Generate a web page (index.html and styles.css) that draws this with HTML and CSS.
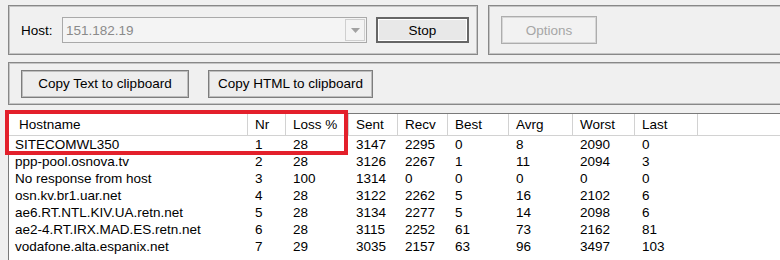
FILE: index.html
```html
<!DOCTYPE html>
<html lang="en">

<head>
    <meta charset="UTF-8">
    <title>Trace results</title>
    <link rel="stylesheet" href="styles.css">
</head>

<body>
    <div class="window">
        <div class="top-row">
            <div class="group host-group">
                <span class="host-label">Host:</span>
                <div class="combo">
                    <span class="combo-text">151.182.19</span>
                    <span class="combo-arrow">
                        <svg width="9" height="5" viewBox="0 0 9 5"><path d="M0 0h9L4.5 5z" fill="#a2a2a2"/></svg>
                    </span>
                </div>
                <button class="btn btn-default">Stop</button>
            </div>
            <div class="group options-group">
                <button class="btn btn-options" disabled>Options</button>
            </div>
        </div>
        <div class="group copy-group">
            <button class="btn btn-copy-text">Copy Text to clipboard</button>
            <button class="btn btn-copy-html">Copy HTML to clipboard</button>
        </div>
        <div class="results">
            <table class="hops">
                <colgroup>
                    <col style="width: 239px">
                    <col style="width: 38px">
                    <col style="width: 63px">
                    <col style="width: 49px">
                    <col style="width: 50px">
                    <col style="width: 61px">
                    <col style="width: 64px">
                    <col style="width: 62px">
                    <col style="width: 63px">
                    <col>
                </colgroup>
                <thead>
                    <tr>
                        <th class="first">Hostname</th>
                        <th>Nr</th>
                        <th>Loss %</th>
                        <th>Sent</th>
                        <th>Recv</th>
                        <th>Best</th>
                        <th>Avrg</th>
                        <th>Worst</th>
                        <th>Last</th>
                        <th class="filler"></th>
                    </tr>
                </thead>
                <tbody>
                    <tr><td class="first">SITECOMWL350</td><td>1</td><td>28</td><td>3147</td><td>2295</td><td>0</td><td>8</td><td>2090</td><td>0</td><td></td></tr>
                    <tr><td class="first">ppp-pool.osnova.tv</td><td>2</td><td>28</td><td>3126</td><td>2267</td><td>1</td><td>11</td><td>2094</td><td>3</td><td></td></tr>
                    <tr><td class="first">No response from host</td><td>3</td><td>100</td><td>1314</td><td>0</td><td>0</td><td>0</td><td>0</td><td>0</td><td></td></tr>
                    <tr><td class="first">osn.kv.br1.uar.net</td><td>4</td><td>28</td><td>3122</td><td>2262</td><td>5</td><td>16</td><td>2102</td><td>6</td><td></td></tr>
                    <tr><td class="first">ae6.RT.NTL.KIV.UA.retn.net</td><td>5</td><td>28</td><td>3134</td><td>2277</td><td>5</td><td>14</td><td>2098</td><td>6</td><td></td></tr>
                    <tr><td class="first">ae2-4.RT.IRX.MAD.ES.retn.net</td><td>6</td><td>28</td><td>3115</td><td>2252</td><td>61</td><td>73</td><td>2162</td><td>81</td><td></td></tr>
                    <tr><td class="first">vodafone.alta.espanix.net</td><td>7</td><td>29</td><td>3035</td><td>2157</td><td>63</td><td>96</td><td>3497</td><td>103</td><td></td></tr>
                </tbody>
            </table>
            <div class="highlight"></div>
        </div>
    </div>
</body>

</html>
```

FILE: styles.css
```css
body {
    margin: 0;
    padding: 0;
    background-color: #f0f0f0;
    font-family: "Liberation Sans", Arial, sans-serif;
    font-size: 13.5px;
    color: #000;
    overflow: hidden;
}

.window {
    width: 800px;
    height: 260px;
    padding: 5px 0 0 8px;
    box-sizing: border-box;
    overflow: hidden;
}

.top-row {
    display: flex;
    gap: 10px;
}

.group {
    box-sizing: border-box;
    border: 1px solid #888;
    box-shadow: inset 0 0 0 1px #c4c4c4;
    display: flex;
    align-items: center;
    padding-left: 12px;
}

.host-group {
    width: 470px;
    height: 50px;
}

.options-group {
    flex: 1;
    height: 50px;
}

.copy-group {
    margin-top: 7px;
    height: 43px;
    gap: 19px;
}

.host-label {
    width: 41px;
}

.combo {
    box-sizing: border-box;
    width: 305px;
    height: 26px;
    border: 1px solid #a9a9a9;
    background-color: #f4f4f4;
    display: flex;
    align-items: center;
    justify-content: space-between;
    padding: 0 1px 0 3px;
    margin-right: 9px;
}

.combo-text {
    color: #8a8a8a;
}

.combo-arrow {
    box-sizing: border-box;
    width: 20px;
    height: 22px;
    border: 1px solid #cfcfcf;
    display: flex;
    align-items: center;
    justify-content: center;
}

.btn {
    box-sizing: border-box;
    font-family: inherit;
    font-size: 13.5px;
    color: #000;
    background-color: #ededed;
    border: 1px solid #7d7d7d;
    box-shadow: inset 0 0 0 1px #bdbdbd;
    height: 28px;
    padding: 0;
    margin: 0;
}

.btn-default {
    width: 93px;
    height: 26px;
    border: 2px solid #666;
    box-shadow: inset 0 0 0 1px #fff;
    background-color: #e8e8e8;
}

.btn-options {
    width: 96px;
    color: #a6a6a6;
    border-color: #adadad;
    box-shadow: inset 0 0 0 1px #d6d6d6;
    background-color: #f2f2f2;
}

.btn-copy-text {
    width: 168px;
}

.btn-copy-html {
    width: 165px;
}

.results {
    position: relative;
    margin-top: 8px;
    border-top: 1px solid #7a7a7a;
    border-left: 1px solid #7a7a7a;
    background-color: #fff;
    height: 160px;
}

.hops {
    table-layout: fixed;
    width: 792px;
    border-collapse: separate;
    border-spacing: 0;
}

.hops th {
    height: 21px;
    padding: 0 0 0 7px;
    text-align: left;
    font-weight: normal;
    border-right: 1px solid #d2d2d2;
    border-bottom: 1px solid #d2d2d2;
    white-space: nowrap;
    overflow: hidden;
}

.hops th.first {
    padding-left: 10px;
}

.hops th.filler {
    border-right: none;
}

.hops td {
    height: 17px;
    padding: 0 0 0 7px;
    white-space: nowrap;
    overflow: hidden;
    line-height: 17px;
}

.hops td.first {
    padding-left: 6px;
}

/* annotation box drawn over the first row */
.highlight {
    position: absolute;
    left: -4px;
    top: -4px;
    width: 343px;
    height: 45px;
    box-sizing: border-box;
    border: 4px solid #e3202b;
}
```
